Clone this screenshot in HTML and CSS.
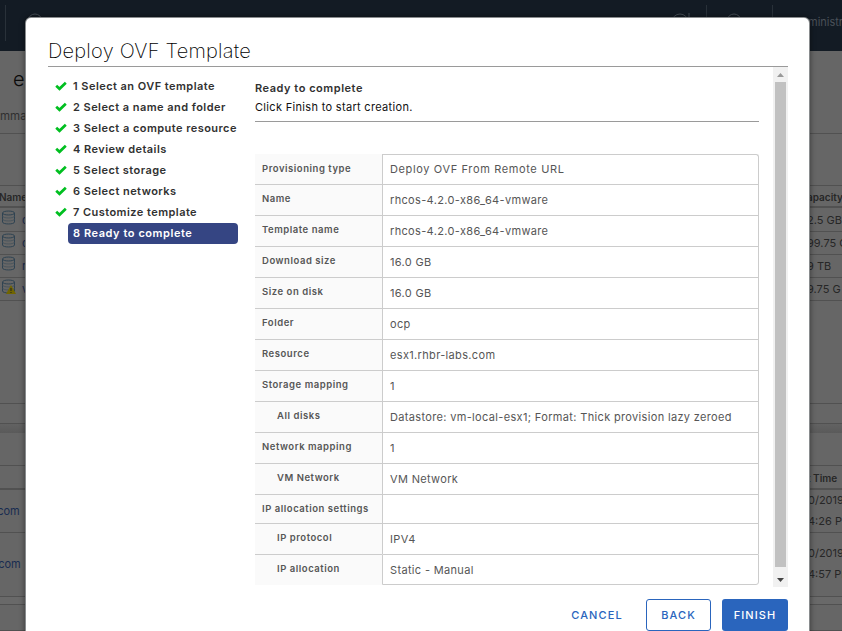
FILE: index.html
```html
<!DOCTYPE html>
<html lang="en">
<head>
<meta charset="utf-8">
<title>Deploy OVF Template</title>
<link rel="stylesheet" href="styles.css">
</head>
<body>
<svg class="defs" width="0" height="0">
  <symbol id="check" viewBox="0 0 12 10"><path d="M1.200 4.800 4.500 7.800 10.800 1.800" fill="none" stroke="#00bf20" stroke-width="2.7"/></symbol>
  <symbol id="store" viewBox="0 0 14 15"><path d="M1 3v9c0 2.6 12 2.6 12 0V3M1 3c0-2.6 12-2.6 12 0S1 5.600 1 3" fill="none" stroke="#2f4352"/><path d="M1 6c0 2.600 12 2.600 12 0M1 9c0 2.600 12 2.600 12 0" fill="none" stroke="#42505a" stroke-width=".8"/></symbol>
  <symbol id="warn" viewBox="0 0 10 9"><path d="M5 0 10 9H0z" fill="#716500"/><path d="M5 3v3M5 7v1" stroke="#222"/></symbol>
</svg>
<div class="page">
  <header class="topbar">
    <i class="sep s1"></i>
    <svg class="ring r1" viewBox="0 0 16 16"><circle cx="8" cy="8" r="7"/></svg>
    <svg class="ring r2" viewBox="0 0 20 16"><circle cx="9" cy="9" r="8"/><path d="M18 0v5"/></svg>
    <i class="sep s2"></i>
    <svg class="ring r3" viewBox="0 0 16 16"><circle cx="8" cy="8" r="7"/></svg>
    <i class="sep s3"></i>
    <span class="user">ministr</span>
  </header>
  <section class="object"><div class="object-name">e</div><div class="tab">mma</div></section>
  <div class="row toolbar"></div>
  <div class="row head"><span>Name</span><span>apacity</span></div>
  <div class="row item first"><span><svg class="store"><use href="#store"/></svg>c</span><span>2.5 GB</span></div>
  <div class="row item"><span><svg class="store"><use href="#store"/></svg>c</span><span>99.75 G</span></div>
  <div class="row item"><span><svg class="store"><use href="#store"/></svg>r</span><span>9 TB</span></div>
  <div class="row item"><span><svg class="store"><use href="#store"/></svg><svg class="warn"><use href="#warn"/></svg>v</span><span>9.75 G</span></div>
  <div class="row blank"></div>
  <div class="row foot"></div>
  <div class="gutter"></div>
  <div class="row tasks"></div>
  <div class="row head taskhead"><span></span><span>t Time</span></div>
  <div class="row task t1"><span>.com</span><span>0/2019<br>4:26 PM</span></div>
  <div class="row task t2"><span>.com</span><span>0/2019<br>4:57 PM</span></div>
  <div class="row thin"></div>
  <div class="row last"></div>
</div>
<main class="modal">
  <h1><span>Deploy OVF Template</span></h1>
  <div class="wizard">
    <ol class="steps">
      <li><svg><use href="#check"/></svg><span>1 Select an OVF template</span></li>
      <li><svg><use href="#check"/></svg><span>2 Select a name and folder</span></li>
      <li><svg><use href="#check"/></svg><span>3 Select a compute resource</span></li>
      <li><svg><use href="#check"/></svg><span>4 Review details</span></li>
      <li><svg><use href="#check"/></svg><span>5 Select storage</span></li>
      <li><svg><use href="#check"/></svg><span>6 Select networks</span></li>
      <li><svg><use href="#check"/></svg><span>7 Customize template</span></li>
      <li class="current"><span>8 Ready to complete</span></li>
    </ol>
    <section class="content">
      <h2>Ready to complete</h2>
      <p>Click Finish to start creation.</p>
      <dl class="summary">
        <dt>Provisioning type</dt><dd>Deploy OVF From Remote URL</dd>
        <dt>Name</dt><dd>rhcos-4.2.0-x86_64-vmware</dd>
        <dt>Template name</dt><dd>rhcos-4.2.0-x86_64-vmware</dd>
        <dt>Download size</dt><dd>16.0 GB</dd>
        <dt>Size on disk</dt><dd>16.0 GB</dd>
        <dt>Folder</dt><dd>ocp</dd>
        <dt>Resource</dt><dd>esx1.rhbr-labs.com</dd>
        <dt>Storage mapping</dt><dd>1</dd>
        <dt class="sub">All disks</dt><dd>Datastore: vm-local-esx1; Format: Thick provision lazy zeroed</dd>
        <dt>Network mapping</dt><dd>1</dd>
        <dt class="sub">VM Network</dt><dd>VM Network</dd>
        <dt>IP allocation settings</dt><dd></dd>
        <dt class="sub">IP protocol</dt><dd>IPV4</dd>
        <dt class="sub">IP allocation</dt><dd>Static - Manual</dd>
      </dl>
    </section>
    <div class="scrollbar"><svg class="arrow up" viewBox="0 0 7 4"><path d="M0 4 3.500 0 7 4z"/></svg><i></i><svg class="arrow down" viewBox="0 0 7 4"><path d="M0 0h7L3.500 4z"/></svg></div>
  </div>
  <footer><button class="cancel">CANCEL</button><button class="back">BACK</button><button class="finish">FINISH</button></footer>
</main>
</body>
</html>
```
FILE: styles.css
```css
* { box-sizing: border-box; }
body { margin: 0; width: 842px; height: 631px; overflow: hidden; position: relative; background: #666; font-family: Inter, "Noto Sans", sans-serif; font-size: 11px; color: #565656; }
h1, h2, p, ol, dl, dd { margin: 0; padding: 0; }
.defs { position: absolute; }

/* Dimmed page behind the dialog */
.page { height: 631px; overflow: hidden; color: #272727; }
.topbar { position: relative; height: 51px; background: #131b24; color: #4a5058; }
.sep { position: absolute; top: 5px; width: 1px; height: 36px; background: #293139; }
.s1 { left: 5px; } .s2 { left: 706px; } .s3 { left: 772px; }
.ring { position: absolute; top: 13px; height: 16px; fill: none; stroke: #454d55; }
.r1 { left: 27px; width: 16px; } .r2 { left: 671px; width: 20px; } .r3 { left: 726px; width: 16px; }
.user { position: absolute; left: 808px; top: 15px; line-height: 14px; }
.object { height: 82px; padding-top: 16px; }
.object-name { height: 25px; padding-left: 13px; font-size: 20px; font-weight: 300; line-height: 25px; color: #0b0b0b; }
.tab { padding-top: 16px; font-size: 11.5px; line-height: 16px; color: #303030; }
.row { display: grid; grid-template-columns: 808px 1fr; border-top: 1px solid #515151; white-space: nowrap; }
.toolbar { height: 52px; }
.head { height: 23px; line-height: 22px; font-size: 10px; font-weight: 600; border-bottom: 2px solid #515151; }
.head span:first-child { margin-left: -1px; }
.head span:last-child { margin-left: -1px; }
.item { height: 23px; line-height: 23px; }
.item.first { border-top-color: transparent; }
.item span:first-child { display: flex; color: #192c51; position: relative; padding-left: 1px; gap: 6px; }
.item span:last-child { margin-left: -1px; }
.store { width: 15px; height: 15px; margin-top: 1px; }
.warn { position: absolute; left: 6px; top: 7px; width: 10px; height: 9px; }
.blank { height: 103px; }
.foot { height: 20px; }
.gutter { height: 10px; background: linear-gradient(#626262, #5a5a5a); border-top: 1px solid #515151; }
.tasks { height: 32px; border: 0; }
.taskhead { height: 25px; line-height: 24px; }
.task { line-height: 21px; }
.task span:first-child { color: #192c51; }
.t1 { height: 42px; border: 0; }
.t1 span:first-child { padding-top: 11px; margin-left: -6px; }
.t2 { height: 64px; padding-top: 10px; }
.t2 span:first-child { padding-top: 11px; margin-left: -5px; }
.thin { height: 8px; background: #696969; }
.last { height: 27px; border-bottom: 1px solid #515151; }

/* Dialog */
.modal { position: absolute; left: 26px; top: 18px; width: 783px; height: 640px; padding: 19px 21px 0 22px; background: #fff; border-radius: 5px; box-shadow: 0 0 0 1px #898c8e, 0 0 5px 2px rgba(0,0,0,.35); }
h1 { height: 30px; border-bottom: 1px solid #9a9a9a; font-size: 20px; font-weight: 250; line-height: 29px; letter-spacing: .23px; color: #000; }
.wizard { display: flex; height: 520px; }
.steps { width: 207px; list-style: none; padding-top: 9px; font-weight: 600; color: #313131; letter-spacing: .45px; }
.steps li { display: flex; align-items: center; height: 21px; padding-left: 7px; gap: 6px; white-space: nowrap; }
.steps span { margin-top: -2px; }
.steps svg { width: 12px; height: 10px; margin-top: -1px; }
.steps .current { width: 170px; margin-left: 20px; padding-left: 5px; background: #354583; border-radius: 4px; color: #fff; letter-spacing: .56px; }
.content { width: 504px; padding-top: 12px; }
h2 { font-size: 11px; font-weight: 600; line-height: 19px; color: #313131; letter-spacing: .53px; }
.content p { height: 24px; line-height: 19px; border-bottom: 1px solid #9a9a9a; color: #111; letter-spacing: .32px; }
.summary { display: grid; grid-template-columns: 127px 377px; grid-template-rows: 30px repeat(10, 31px) 29px 31px 31px; margin-top: 32px; }
dt { padding-left: 7px; background: #fafafa; border-top: 1px solid #ccc; font-size: 9.5px; font-weight: 600; line-height: 27px; letter-spacing: .54px; white-space: nowrap; }
dt:first-child { border-top-color: #fafafa; }
dt.sub { padding-left: 22px; }
dd { padding-left: 7px; border: 1px solid #ccc; border-bottom: 0; line-height: 30px; letter-spacing: .34px; white-space: nowrap; }
dt:first-child + dd { border-top-right-radius: 3px; line-height: 29px; letter-spacing: .63px; }
dd:last-child { border-bottom: 1px solid #ccc; border-bottom-right-radius: 3px; }
.scrollbar { width: 15px; height: 520px; margin-left: 14px; display: flex; flex-direction: column; align-items: center; background: #f1f1f1; }
.scrollbar i { width: 11px; height: 485px; margin-top: 5px; background: #c1c1c1; }
.arrow { width: 7px; height: 4px; fill: #999; }
.up { margin-top: 6px; }
.down { margin-top: 11px; fill: #444; }
footer { display: flex; justify-content: flex-end; margin-top: 12px; }
button { height: 32px; padding: 0; font: 500 11px/30px Inter, sans-serif; letter-spacing: 1.1px; border: 1px solid transparent; border-radius: 3px; background: none; color: #2a65bd; }
.cancel { width: 76px; margin-right: 11px; }
.back { width: 65px; border-color: #2a65bd; margin-right: 11px; }
.finish { width: 66px; background: #2a65bd; color: #fff; }
```
